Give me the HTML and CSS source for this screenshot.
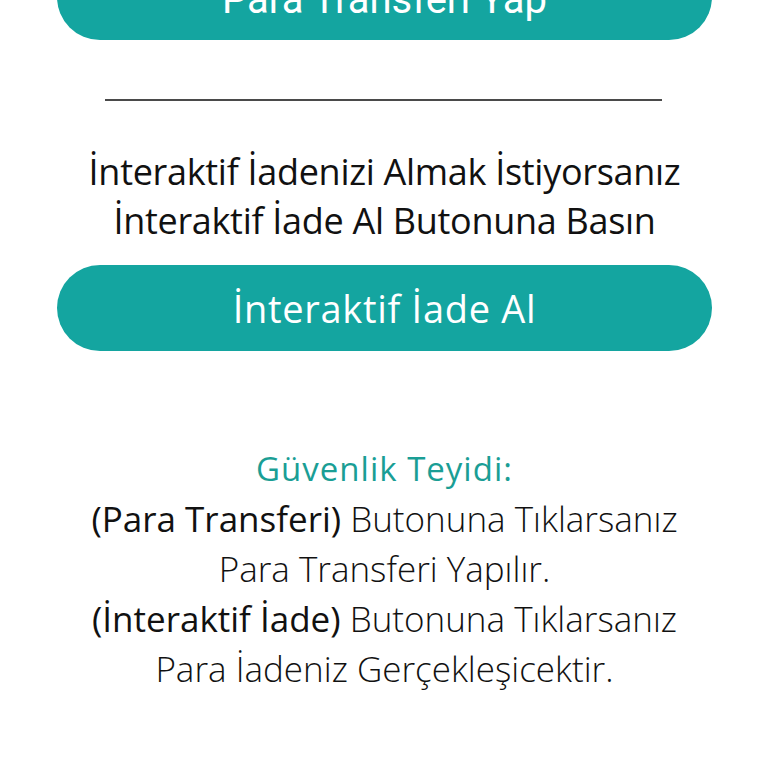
FILE: index.html
```html
<!DOCTYPE html>
<html lang="tr">
<head>
<meta charset="utf-8">
<link rel="stylesheet" href="styles.css">
</head>
<body>
<main class="page">
  <div class="btn btn-top">Para Transferi Yap</div>
  <hr class="divider">
  <p class="prompt">İnteraktif İadenizi Almak İstiyorsanız<br>İnteraktif İade Al Butonuna Basın</p>
  <div class="btn btn-main">İnteraktif İade Al</div>
  <section class="notice">
    <h2 class="notice-title">Güvenlik Teyidi:</h2>
    <p class="notice-text"><span class="strong">(Para Transferi)</span> Butonuna Tıklarsanız<br>Para Transferi Yapılır.<br><span class="strong">(İnteraktif İade)</span> Butonuna Tıklarsanız<br>Para İadeniz Gerçekleşicektir.</p>
  </section>
</main>
</body>
</html>
```
FILE: styles.css
```css
html, body {
  margin: 0;
  padding: 0;
  background: #ffffff;
}
body {
  font-family: "Open Sans", Lato, sans-serif;
  color: #111111;
  overflow: hidden;
  font-variant-ligatures: none;
}
.page {
  width: 655px;
  margin: 0 auto 0 57px;
  display: flex;
  flex-direction: column;
  align-items: center;
}
.btn {
  width: 100%;
  height: 86px;
  border-radius: 43px;
  background: #14a5a0;
  color: #ffffff;
  display: flex;
  align-items: center;
  justify-content: center;
  box-sizing: border-box;
}
.btn-top {
  margin-top: -46px;
  padding-top: 4px;
  font-family: Roboto, sans-serif;
  font-size: 40px;
}
.divider {
  width: 557px;
  height: 2px;
  border: 0;
  background: #4a4a4a;
  margin: 59px 0 0 -3px;
}
.prompt {
  margin: 46px 0 0;
  text-align: center;
  font-size: 36px;
  line-height: 49px;
  font-weight: 400;
  letter-spacing: -0.3px;
}
.btn-main {
  margin-top: 20px;
  font-size: 38px;
  font-weight: 400;
  letter-spacing: 0.7px;
}
.notice {
  margin-top: 93px;
  text-align: center;
}
.notice-title {
  margin: 0;
  font-size: 33px;
  line-height: 50px;
  font-weight: 400;
  color: #1a9e95;
  letter-spacing: 1px;
}
.notice-text {
  margin: 0;
  font-size: 35px;
  line-height: 50px;
  font-weight: 300;
}
.strong {
  font-weight: 400;
}
```
